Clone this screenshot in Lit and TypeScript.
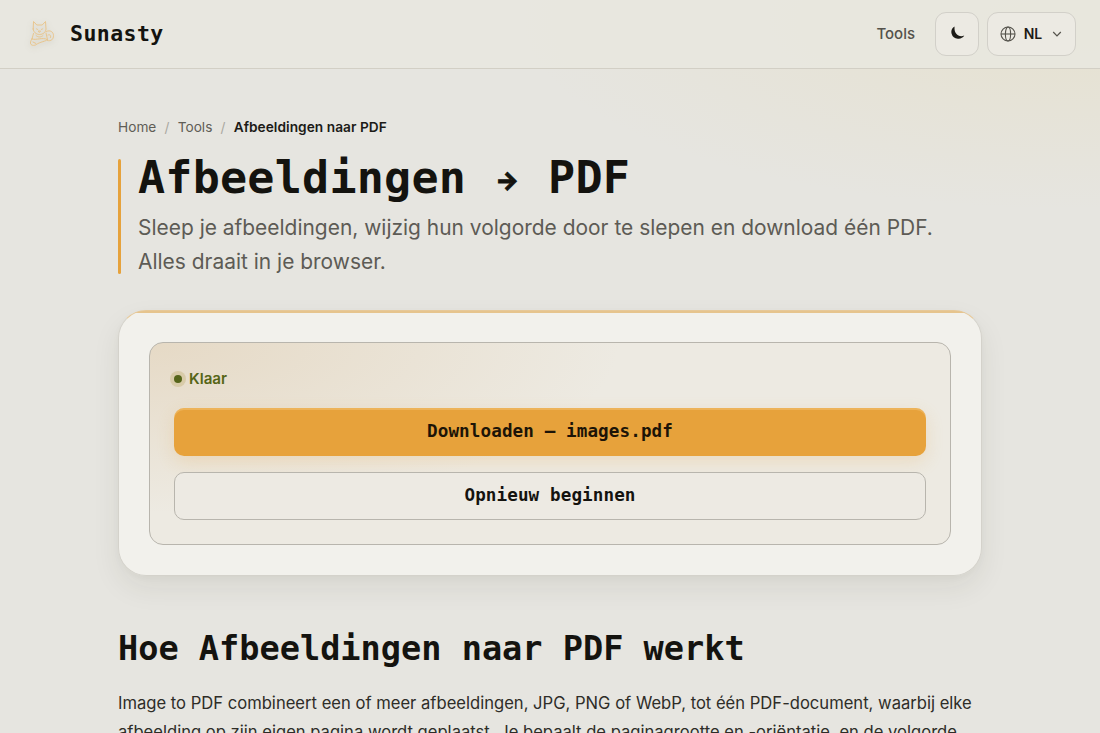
import { LitElement, html, css } from "lit";
import { customElement } from "lit/decorators.js";

@customElement("app-root")
export class AppRoot extends LitElement {
  static styles = css`
    :host {
      display: block;
      height: 733px;
      overflow: hidden;
      box-sizing: border-box;
      font-family: Inter, "Liberation Sans", sans-serif;
      color: #14130f;
      background:
        radial-gradient(ellipse 560px 190px at 1080px 20px, rgba(230, 215, 165, 0.27), rgba(230, 215, 165, 0) 100%),
        #e6e5e0;
    }
    * { box-sizing: border-box; }
    .bar {
      height: 69px;
      display: flex;
      align-items: center;
      padding: 0 24px 1px 28px;
      border-bottom: 1px solid #d2cfc5;
      background: rgba(232, 231, 223, 0.85);
    }
    .logo { width: 28px; height: 30px; filter: drop-shadow(0 2px 3px rgba(80, 70, 40, 0.2)); }
    .mono { font-family: "DejaVu Sans Mono", monospace; font-weight: 700; white-space: pre; }
    .brand { margin-left: 14px; font-size: 21.5px; letter-spacing: 0.45px; }
    .nav { margin-left: auto; display: flex; align-items: center; }
    .link { font-size: 15px; font-weight: 500; color: #54524b; margin-right: 20px; }
    .btn {
      height: 44px;
      display: flex;
      align-items: center;
      justify-content: center;
      border: 1px solid #d2d0c9;
      border-radius: 11px;
      background: #eceae3;
      color: #1c1b17;
    }
    .theme { width: 44px; margin-right: 8px; padding: 0 0 2px 2px; }
    .lang { width: 89px; font-size: 14px; font-weight: 600; padding-right: 1px; }
    .lang span { margin: 0 10px 0 8px; }
    main { padding: 48px 118px 0; }
    .crumbs { display: flex; gap: 8.2px; font-size: 13.7px; line-height: 20px; color: #5f5d56; white-space: nowrap; }
    .crumbs i { font-style: normal; color: #aaa8a1; }
    .crumbs b { font-weight: 600; color: #1c1b17; letter-spacing: 0.04px; }
    .hero { margin-top: 22px; height: 115px; display: flex; gap: 17px; }
    .rule { width: 3px; border-radius: 2px; background: #e6a23c; }
    h1, h2, p { margin: 0; }
    h1 { display: flex; height: 38px; font-size: 45px; line-height: 38px; letter-spacing: 0.25px; }
    .arrow {
      width: 27.34px;
      margin: 0 27.34px;
      display: flex;
      justify-content: center;
      padding-top: 2px;
      font-family: Inter, sans-serif;
      font-size: 25px;
      font-weight: 800;
      letter-spacing: 0;
      -webkit-text-stroke: 0.8px currentColor;
    }
    .lead { margin-top: 14px; font-size: 20.95px; line-height: 34px; color: #5d5b55; white-space: nowrap; }
    .card {
      margin-top: 36px;
      height: 266px;
      padding: 31px 30px;
      border: 1px solid #d4d2cb;
      border-top-color: #e6c898;
      border-radius: 28px;
      background: linear-gradient(#e6c48d 0 2px, #f2f1ec 2px);
      box-shadow: 0 12px 28px rgba(50, 48, 30, 0.08), 0 2px 6px rgba(50, 48, 30, 0.03);
    }
    .panel {
      height: 203px;
      padding: 24px;
      border: 1px solid #b8b5ad;
      border-radius: 14px;
      background:
        radial-gradient(ellipse 470px 170px at 0 0, rgba(219, 193, 155, 0.4), rgba(219, 193, 155, 0) 100%),
        #edeae2;
    }
    .status { display: flex; align-items: center; gap: 7px; height: 24px; color: #566516; font-size: 15.2px; font-weight: 600; }
    .status b { font-weight: 600; padding-bottom: 2px; }
    .dot { width: 8px; height: 8px; border-radius: 50%; background: #56651a; box-shadow: 0 0 0 4px rgba(170, 145, 60, 0.24); }
    .action { height: 48px; display: flex; align-items: center; justify-content: center; padding-bottom: 2px; border-radius: 10px; font-size: 17.6px; letter-spacing: 0.1px; }
    .primary {
      margin-top: 17px;
      background: #e7a23b;
      color: #1c1407;
      box-shadow: inset 0 2px 0 rgba(255, 230, 180, 0.25), 0 6px 18px rgba(230, 162, 60, 0.2);
    }
    .secondary { margin-top: 16px; border: 1px solid #b8b5ad; background: #edeae3; }
    h2 { margin-top: 52px; font-size: 33.6px; line-height: 42px; }
    .body { margin-top: 19px; font-size: 16.6px; line-height: 29px; color: #2e2d28; white-space: nowrap; }
  `;

  render() {
    return html`
      <header class="bar">
        <svg class="logo" viewBox="0 0 28 30" fill="none" stroke="#e9c285" stroke-width="0.9" stroke-linejoin="round" stroke-linecap="round">
          <path d="M5.200 10 5.500 2.500 8.800 6h5.400L17.500 2.500 18 10c0 3-3 5.500-6.400 5.500S5.200 13 5.200 10z" />
          <path d="M8.300 9.800l1.500.7M14.800 9.800l-1.500.7M10.600 12h2l-1 1.200z" stroke-width="0.8" />
          <path d="M5.500 14.500 4 20M18 14l1.500 6.500M8 16.500c2 2 5 2 7 0" />
          <path d="M18.500 12.500c3.500-2 7 .5 7 4 0 4-2.500 6-6 5M20 16c2-1 3 .5 2.500 2.500" />
          <path d="M4 20c4 1.500 11-2 15 .5.500 1.500-8 2.500-10.500 5-2.500 1.500-6 1-6-1.500C2.500 22.500 3 21 4 20zM5 23l3 1.500" />
        </svg>
        <span class="brand mono">Sunasty</span>
        <nav class="nav">
          <span class="link">Tools</span>
          <span class="btn theme">
            <svg width="14" height="14" viewBox="0 0 14 14" fill="currentColor"><path d="M3.600.600A6.500 6.500 0 0 0 6.800 12.700 6.800 6.800 0 0 0 13.300 9.600C10 10.900 7 10 5.300 7.800 3.600 5.600 3.300 3 3.600.600z" /></svg>
          </span>
          <span class="btn lang">
            <svg width="16" height="16" viewBox="0 0 16 16" fill="none" stroke="#54524b" stroke-width="1.1"><circle cx="8" cy="8" r="7" /><ellipse cx="8" cy="8" rx="2.6" ry="7" /><path d="M1 8h14" /></svg>
            <span>NL</span>
            <svg width="10" height="10" viewBox="0 0 10 10" fill="none" stroke="#54524b" stroke-width="1.2"><path d="m1.200 3 3.800 3.800L8.800 3" /></svg>
          </span>
        </nav>
      </header>
      <main>
        <div class="crumbs"><span>Home</span><i>/</i><span>Tools</span><i>/</i><b>Afbeeldingen naar PDF</b></div>
        <section class="hero">
          <div class="rule"></div>
          <div>
            <h1 class="mono"><span>Afbeeldingen</span><span class="arrow">→</span><span>PDF</span></h1>
            <p class="lead">Sleep je afbeeldingen, wijzig hun volgorde door te slepen en download één PDF.<br />Alles draait in je browser.</p>
          </div>
        </section>
        <section class="card">
          <div class="panel">
            <div class="status"><span class="dot"></span><b>Klaar</b></div>
            <div class="action primary mono">Downloaden — images.pdf</div>
            <div class="action secondary mono">Opnieuw beginnen</div>
          </div>
        </section>
        <h2 class="mono">Hoe Afbeeldingen naar PDF werkt</h2>
        <p class="body">Image to PDF combineert een of meer afbeeldingen, JPG, PNG of WebP, tot één PDF-document, waarbij elke<br />afbeelding op zijn eigen pagina wordt geplaatst. Je bepaalt de paginagrootte en -oriëntatie, en de volgorde</p>
      </main>
    `;
  }
}
